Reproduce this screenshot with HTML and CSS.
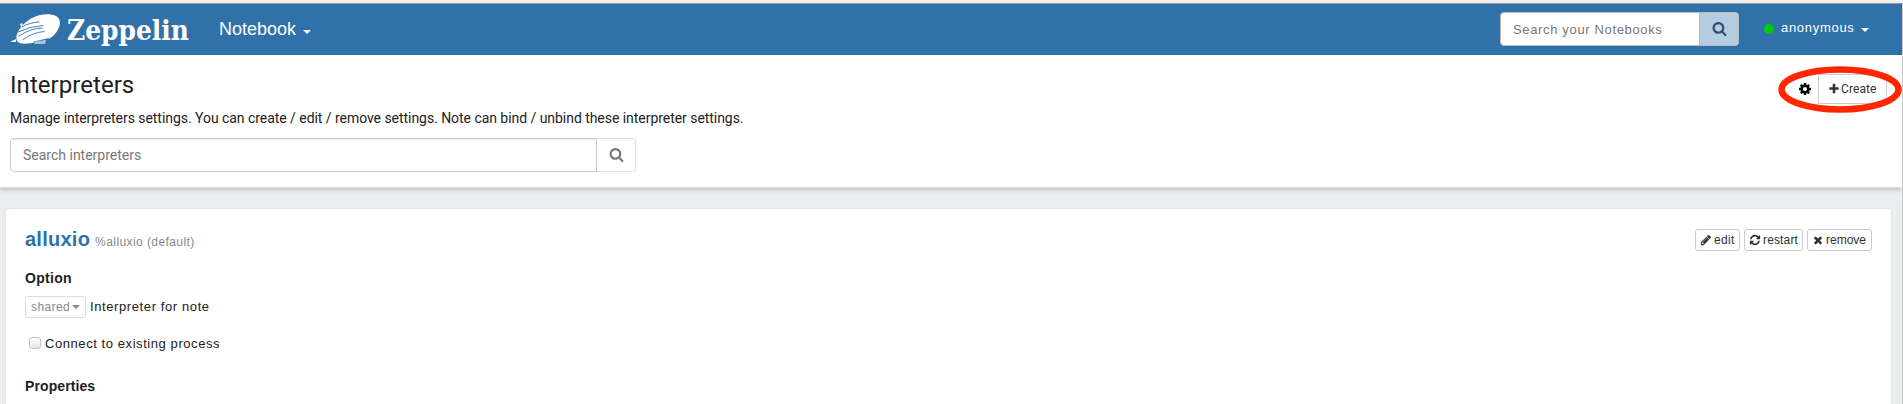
FILE: index.html
```html
<!DOCTYPE html>
<html lang="en">
<head>
<meta charset="utf-8">
<title>Zeppelin</title>
<link rel="stylesheet" href="styles.css">
</head>
<body>
<svg class="defs" width="0" height="0">
  <symbol id="search" viewBox="0 0 1792 1792"><path d="M1216 832q0-185-131.500-316.500t-316.500-131.500-316.500 131.500-131.500 316.500 131.500 316.500 316.500 131.500 316.500-131.500 131.500-316.500zm512 832q0 52-38 90t-90 38q-54 0-90-38l-343-342q-179 124-399 124-143 0-273.500-55.500t-225-150-150-225-55.500-273.500 55.500-273.500 150-225 225-150 273.500-55.500 273.500 55.500 225 150 150 225 55.500 273.500q0 220-124 399l343 343q37 37 37 90z"/></symbol>
  <symbol id="plus" viewBox="0 0 1792 1792"><path d="M1600 736v192q0 40-28 68t-68 28h-416v416q0 40-28 68t-68 28h-192q-40 0-68-28t-28-68v-416h-416q-40 0-68-28t-28-68v-192q0-40 28-68t68-28h416v-416q0-40 28-68t68-28h192q40 0 68 28t28 68v416h416q40 0 68 28t28 68z"/></symbol>
  <symbol id="times" viewBox="0 0 1792 1792"><path d="M1490 1322q0 40-28 68l-136 136q-28 28-68 28t-68-28l-294-294-294 294q-28 28-68 28t-68-28l-136-136q-28-28-28-68t28-68l294-294-294-294q-28-28-28-68t28-68l136-136q28-28 68-28t68 28l294 294 294-294q28-28 68-28t68 28l136 136q28 28 28 68t-28 68l-294 294 294 294q28 28 28 68z"/></symbol>
  <symbol id="cog" viewBox="0 0 1792 1792"><path d="M1152 896q0-106-75-181t-181-75-181 75-75 181 75 181 181 75 181-75 75-181zm512-109v222q0 12-8 23t-20 13l-185 28q-19 54-39 91 35 50 107 138 10 12 10 25t-9 23q-27 37-99 108t-94 71q-12 0-26-9l-138-108q-44 23-91 38-16 136-29 186-7 28-36 28h-222q-14 0-24.500-8.500t-11.500-21.500l-28-184q-49-16-90-37l-141 107q-10 9-25 9-14 0-25-11-126-114-165-168-7-10-7-23 0-12 8-23 15-21 51-66.500t54-70.500q-27-50-41-99l-183-27q-13-2-21-12.500t-8-23.500v-222q0-12 8-23t19-13l186-28q14-46 39-92-40-57-107-138-10-12-10-24 0-10 9-23 26-36 98.500-107.500t94.500-71.500q13 0 26 10l138 107q44-23 91-38 16-136 29-186 7-28 36-28h222q14 0 24.500 8.500t11.500 21.500l28 184q49 16 90 37l142-107q9-9 24-9 13 0 25 10 129 119 165 170 7 8 7 22 0 12-8 23-15 21-51 66.500t-54 70.500q26 50 41 98l183 28q13 2 21 12.500t8 23.500z"/></symbol>
  <symbol id="refresh" viewBox="0 0 1792 1792"><path d="M1639 1056q0 5-1 7-64 268-268 434.500t-478 166.500q-146 0-282.500-55t-243.500-157l-129 129q-19 19-45 19t-45-19-19-45v-448q0-26 19-45t45-19h448q26 0 45 19t19 45-19 45l-137 137q71 66 161 102t187 36q134 0 250-65t186-179q11-17 53-117 8-23 30-23h192q13 0 22.500 9.500t9.500 22.500zm25-800v448q0 26-19 45t-45 19h-448q-26 0-45-19t-19-45 19-45l138-138q-148-137-349-137-134 0-250 65t-186 179q-11 17-53 117-8 23-30 23h-199q-13 0-22.500-9.500t-9.500-22.500v-7q65-268 270-434.500t480-166.500q146 0 284 55.500t245 156.500l130-129q19-19 45-19t45 19 19 45z"/></symbol>
  <symbol id="pencil" viewBox="0 0 1792 1792"><path d="M491 1536l91-91-235-235-91 91v107h128v128h107zm523-928q0-22-22-22-10 0-17 7l-542 542q-7 7-7 17 0 22 22 22 10 0 17-7l542-542q7-7 7-17zm-54-192l416 416-832 832h-416v-416zm683 96q0 53-37 90l-166 166-416-416 166-165q36-38 90-38 53 0 91 38l235 234q37 39 37 91z"/></symbol>
</svg>

<div class="page">
<nav class="navbar">
  <svg class="logo" viewBox="0 0 50 31">
    <path fill="#fff" d="M7 27C4 20 12 10 21 4.500C29 0 40-1 46 2C52 5 51 14 44 21C39 26 34 27 27 28C19 30 10 31 7 27Z"/>
    <path fill="#fff" d="M0 28L6 25L6 28ZM10 10L12 9L13 12L11 13Z"/>
    <path fill="#3071a9" d="M24 27.500L39 24L37 31L23 31Z"/>
    <path fill="#a9c5de" d="M25 27.500L36 26L35 30L24 30Z"/>
    <path fill="none" stroke="#3071a9" stroke-width=".9" stroke-linecap="round" d="M12 13Q19 8.500 29 8M8 18Q20 12 33 11.500M9 22Q21 14 32 14M13 25.500Q23 18.500 34 17.500"/>
  </svg>
  <span class="brand">Zeppelin</span>
  <span class="menu">Notebook<i class="caret"></i></span>
  <div class="nav-search">
    <span class="nav-field">Search your Notebooks</span>
    <span class="nav-go"><svg class="ic"><use href="#search"/></svg></span>
  </div>
  <i class="dot"></i>
  <span class="user">anonymous<i class="caret"></i></span>
</nav>

<header class="head">
  <div class="head-row">
    <h1 class="title">Interpreters</h1>
    <div class="tools">
      <span class="gear"><svg class="ic"><use href="#cog"/></svg></span>
      <span class="create"><svg class="ic"><use href="#plus"/></svg>Create</span>
      <svg class="ring" viewBox="0 0 124 47"><ellipse cx="62" cy="23.500" rx="58.500" ry="20" fill="none" stroke="#ff2600" stroke-width="6.500"/></svg>
    </div>
  </div>
  <p class="desc">Manage interpreters settings. You can create / edit / remove settings. Note can bind / unbind these interpreter settings.</p>
  <div class="find">
    <span class="find-field"><span>Search interpreters</span></span>
    <span class="find-go"><svg class="ic"><use href="#search"/></svg></span>
  </div>
</header>

<main class="card">
  <div class="card-head">
    <h2 class="name">alluxio</h2>
    <span class="alias">%alluxio (default)</span>
    <div class="actions">
      <span class="btn edit"><svg class="ic"><use href="#pencil"/></svg><span>edit</span></span>
      <span class="btn restart"><svg class="ic"><use href="#refresh"/></svg><span>restart</span></span>
      <span class="btn remove"><svg class="ic"><use href="#times"/></svg><span>remove</span></span>
    </div>
  </div>
  <h3 class="sub">Option</h3>
  <div class="mode"><span class="shared"><span>shared</span><i class="caret"></i></span><span class="mode-text">Interpreter for note</span></div>
  <div class="connect"><i class="box"></i><span class="connect-text">Connect to existing process</span></div>
  <h3 class="sub props">Properties</h3>
</main>
</div>
</body>
</html>
```
FILE: styles.css
```css
* { box-sizing: border-box; }
body { margin: 0; background: #f1f1f1; font: 14px/20px Roboto, sans-serif; color: #212121; }
.defs { display: none; }
.page { height: 401px; margin-top: 3px; border-top: 1px solid #999; border-right: 1px solid #ccc; background: #eaeeef; overflow: hidden; white-space: nowrap; }
.ic { display: block; fill: currentColor; flex: none; }
.caret { display: inline-block; border-top: 4px solid; border-left: 4px solid transparent; border-right: 4px solid transparent; }

.navbar { display: flex; height: 51px; background: #3071a9; color: #fff; font-family: "Liberation Sans", Arial, sans-serif; }
.logo { width: 50px; height: 31px; margin: 10px 0 0 10px; flex: none; }
.brand { width: 159px; padding-left: 7px; font: bold 28px/53px "DejaVu Serif", serif; transform: scaleX(.891); transform-origin: 7px 0; flex: none; }
.menu { font-size: 18px; line-height: 50px; flex: none; }
.menu .caret { margin-left: 7px; vertical-align: 1px; }
.nav-search { display: flex; width: 239px; height: 34px; margin: 8px 0 0 auto; border: 1px solid #bbb; border-radius: 4px; background: #fff; overflow: hidden; }
.nav-field { flex: 1; padding-left: 12px; font-size: 13px; line-height: 34px; color: #777; letter-spacing: .65px; }
.nav-go { width: 39px; border-left: 1px solid #a9bfd3; background: #b5cce1; color: #304d69; padding: 8px 0 0 12px; }
.nav-go .ic, .find-go .ic { width: 15px; height: 15px; }
.dot { width: 10px; height: 10px; border-radius: 50%; background: #0c0; margin: 20px 7px 0 25px; }
.user { width: 121px; font-size: 13px; line-height: 47px; letter-spacing: .7px; }
.user .caret { margin-left: 6px; vertical-align: 0; }

.head { height: 133px; background: #fff; padding: 14px 15px 0 10px; box-shadow: 0 2px 4px rgba(0,0,0,.18); border-bottom: 1px solid #dcdfdf; }
.head-row { display: flex; justify-content: space-between; height: 39px; }
.title { margin: 0; font: 24px/32px Roboto, sans-serif; letter-spacing: .05px; }
.tools { position: relative; display: flex; height: 30px; margin-top: 5px; font-size: 12px; line-height: 28px; }
.gear { padding: 8px 6px 0 0; color: #000; }
.gear .ic { width: 14px; height: 14px; }
.create { display: flex; width: 69px; height: 30px; padding-left: 9px; border: 1px solid #ccc; border-radius: 0 3px 3px 0; color: #333; gap: 1px; letter-spacing: .1px; }
.create .ic { width: 12px; height: 12px; margin-top: 8px; }
.ring { position: absolute; right: -15px; top: -8px; width: 124px; height: 47px; }
.desc { margin: 0; font-size: 14px; line-height: 21px; letter-spacing: -.045px; }
.find { display: flex; width: 626px; height: 34px; margin-top: 9px; }
.find-field { flex: 1; border: 1px solid #ccc; border-radius: 4px 0 0 4px; box-shadow: inset 0 1px 1px rgba(0,0,0,.075); padding-left: 12px; line-height: 33px; color: #777; }
.find-go { width: 39px; border: 1px solid #ddd; border-left: 0; border-radius: 0 4px 4px 0; color: #777; padding: 8px 0 0 12px; }

.card { width: 1887px; height: 220px; margin: 20px 0 0 5px; padding: 18px 19px; background: #fff; border: 1px solid #e3e6e6; border-radius: 3px; font-family: "Liberation Sans", Arial, sans-serif; }
.card-head { display: flex; align-items: baseline; height: 41px; }
.name { margin: 0 5px 0 0; font-size: 20px; line-height: 24px; color: #3071a9; letter-spacing: .25px; }
.alias { font-size: 12px; color: #888; letter-spacing: .42px; }
.actions { display: flex; gap: 4px; margin-left: auto; align-self: flex-start; margin-top: 2px; }
.btn { display: flex; height: 22px; padding-left: 4px; gap: 2px; border: 1px solid #ccc; border-radius: 3px; font-size: 12px; line-height: 20px; color: #333; letter-spacing: .3px; }
.btn .ic { width: 12px; height: 12px; margin-top: 4px; }
.edit { width: 45px; }
.restart { width: 59px; letter-spacing: .15px; }
.remove { width: 65px; letter-spacing: 0; }
.sub { margin: 0; font-size: 14px; line-height: 20px; letter-spacing: .3px; }
.mode { display: flex; margin-top: 8px; }
.shared { display: flex; align-items: center; width: 61px; height: 22px; padding-left: 5px; border: 1px solid #ddd; border-radius: 3px; color: #888; font-size: 12px; letter-spacing: .4px; }
.shared .caret { margin-left: 2px; }
.mode-text { margin-left: 4px; line-height: 21px; letter-spacing: .6px; font-size: 13px; }
.connect { display: flex; margin-top: 15px; }
.box { width: 12px; height: 12px; margin: 4px 4px 0 4px; border: 1px solid #c4c4c4; border-radius: 3px; background: linear-gradient(#fff, #e6e6e6); }
.connect-text { line-height: 21px; letter-spacing: .57px; font-size: 13px; }
.props { margin-top: 22px; letter-spacing: .1px; }
```
